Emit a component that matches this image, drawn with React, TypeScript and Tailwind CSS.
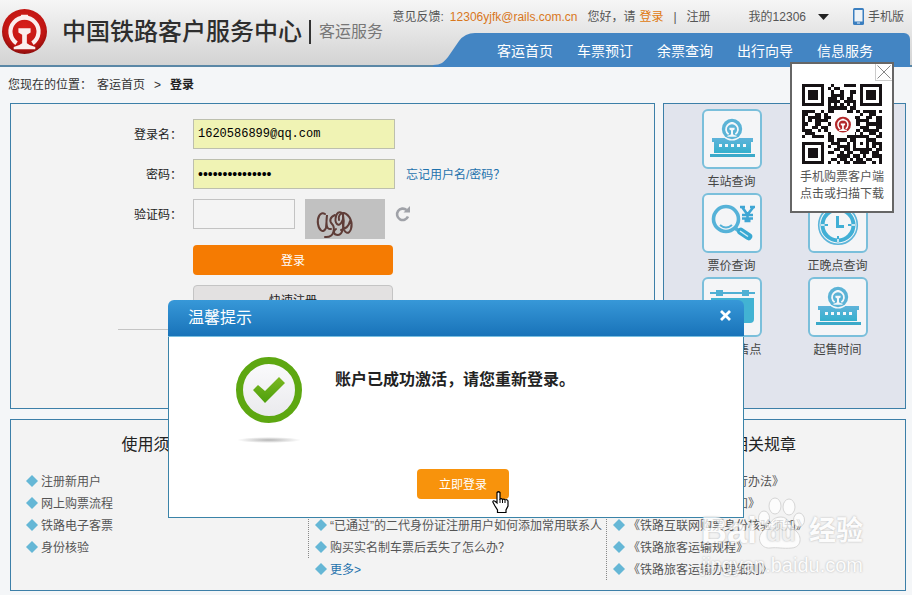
import React from "react";

const navItems = ["客运首页", "车票预订", "余票查询", "出行向导", "信息服务"];

const notices = ["注册新用户", "网上购票流程", "铁路电子客票", "身份核验"];

const questions = [
    "什么是互联网售票？",
    "如何办理退票和改签？",
    "“已通过”的二代身份证注册用户如何添加常用联系人",
    "购买实名制车票后丢失了怎么办？",
    "更多>",
];

const rules = [
    "《铁路车票实名制暂行办法》",
    "《铁路互联网售票须知》",
    "《铁路互联网购票身份核验须知》",
    "《铁路旅客运输规程》",
    "《铁路旅客运输办理细则》",
];

const qrRows = [
    "1111111001000111101111111",
    "1000001010110000001000001",
    "1011101001001001101011101",
    "1011101001111001001011101",
    "1011101011101011001011101",
    "1000001011110111101000001",
    "1111111010101010101111111",
    "0000000011111101100000000",
    "1111001011000011010111101",
    "1100110100000000001001100",
    "1011110110000000110011011",
    "1010111100000000011110011",
    "1100110010000000010011111",
    "1001101100000000001110011",
    "1110010100000000010111110",
    "0111000010000000101001101",
    "1001111011000011111110011",
    "0000000011011101100011100",
    "1111111001110010101010111",
    "1000001010011110100010101",
    "1011101000110110111111011",
    "1011101011001011001110110",
    "1011101000011110110100111",
    "1000001001101101011011001",
    "1111111010010110111100101",
];

function RailMark(props: { fill: string }) {
    const { fill } = props;
    return (
        <g fill={fill}>
            <path
                d="M15.500 36.500A15 15 0 1 1 32.500 36.500"
                fill="none"
                stroke={fill}
                strokeWidth="4.500"
            />
            <path d="M20.500 6h7l1.500 5h-10z" />
            <path d="M17.500 20.500h13v4.500l-4 2.500v9l3 2 6 2v2.500H12.500v-2.500l6-2 3-2v-9l-4-2.500z" />
        </g>
    );
}

function Logo(props: { className?: string }) {
    return (
        <svg viewBox="0 0 48 48" className={props.className} aria-hidden="true">
            <defs>
                <radialGradient id="logo-red" cx="0.5" cy="0.4" r="0.6">
                    <stop offset="0" stopColor="#d8201c" />
                    <stop offset="0.75" stopColor="#c01512" />
                    <stop offset="1" stopColor="#8d0e0d" />
                </radialGradient>
            </defs>
            <circle cx="24" cy="24" r="24" fill="url(#logo-red)" />
            <RailMark fill="#fbeeee" />
        </svg>
    );
}

function QrCode() {
    return (
        <svg viewBox="0 0 25 25" className="size-20" shapeRendering="crispEdges" role="img" aria-label="二维码">
            {qrRows.map((row, y) =>
                row.split("").map((cell, x) =>
                    cell === "1" ? <rect key={`${x}_${y}`} x={x} y={y} width="1" height="1" fill="#161214" /> : null
                )
            )}
            <rect x="9" y="9" width="7.5" height="7" fill="#fff" />
            <g transform="translate(10.3 10.2) scale(0.104)" shapeRendering="auto">
                <circle cx="24" cy="24" r="24" fill="#b3282a" />
                <RailMark fill="#fff" />
            </g>
        </svg>
    );
}

// Icons are drawn on a 60px tile, the 2px tile border lies outside the viewBox
const tileBox = "2 2 56 56";

function StationIcon() {
    return (
        <svg viewBox={tileBox} className="size-full" aria-hidden="true">
            <defs>
                <linearGradient id="station" x1="0" y1="0" x2="0" y2="1">
                    <stop offset="0" stopColor="#5fb3da" />
                    <stop offset="1" stopColor="#35b0cd" />
                </linearGradient>
            </defs>
            <path d="M10 29h41v4H10zM12 33h37v11H12z" fill="url(#station)" />
            <path d="M8 45h45v3H8z" fill="#3ba9c9" />
            <circle cx="30" cy="20" r="11.500" fill="#f4f7fa" />
            <circle cx="30" cy="20" r="10.200" fill="#5cb3d6" />
            <g transform="translate(20.4 10.6) scale(0.4)">
                <RailMark fill="#f4f7fa" />
            </g>
            <path d="M17 35h3v3h-3zM23 35h3v3h-3zM29 35h3v3h-3zM35 35h3v3h-3zM41 35h3v3h-3z" fill="#f4f7fa" />
        </svg>
    );
}

function PriceIcon() {
    return (
        <svg viewBox={tileBox} className="size-full" fill="none" aria-hidden="true">
            <circle cx="24" cy="26" r="12.500" stroke="#55b2d8" strokeWidth="3.600" />
            <path d="M18 32q6 5 12 0" stroke="#55b2d8" strokeWidth="2" />
            <path d="M33 35l4 3" stroke="#55b2d8" strokeWidth="4" />
            <path d="M39 38.500l7.500 5" stroke="#3aa9d2" strokeWidth="7.500" strokeLinecap="round" />
            <path d="M38 38l8 5.500" stroke="#d6eef7" strokeWidth="1.500" />
            <path d="M38 14h5M48 14h5M40 14l5.500 7.500 6-7.500M45.500 21v8M40 22h11M40 25.500h11M42.500 28h6" stroke="#3fa6d4" strokeWidth="2.600" />
        </svg>
    );
}

function ClockIcon() {
    return (
        <svg viewBox={tileBox} className="size-full" fill="none" aria-hidden="true">
            <circle cx="30" cy="32" r="19.300" stroke="#5cb5da" strokeWidth="1.600" />
            <circle cx="30" cy="32" r="15.500" stroke="#41afd5" strokeWidth="4" />
            <path d="M29.500 23v10.500H36" stroke="#41afd5" strokeWidth="3" />
            <path d="M30 15v3M30 46v3M13 32h3M44 32h3" stroke="#f4f7fa" strokeWidth="1.500" />
            <path d="M30 43v3M17 32h3M40 32h3" stroke="#41afd5" strokeWidth="2" />
        </svg>
    );
}

function AgencyIcon() {
    return (
        <svg viewBox={tileBox} className="size-full" aria-hidden="true">
            <path d="M8 15h45v2H8z" fill="#4fb0d4" />
            <path d="M14 13h7v6h-7zM40 13h7v6h-7z" fill="#4fb0d4" />
            <path d="M9 21h43v21q0 4-4 4H13q-4 0-4-4z" fill="#42b3d3" />
        </svg>
    );
}

const services = [
    { name: "车站查询", icon: <StationIcon /> },
    { name: "余票查询", icon: <ClockIcon /> },
    { name: "票价查询", icon: <PriceIcon /> },
    { name: "正晚点查询", icon: <ClockIcon /> },
    { name: "客票代售点", icon: <AgencyIcon /> },
    { name: "起售时间", icon: <StationIcon /> },
];

function Header() {
    return (
        <header className="flex h-[67px] justify-between border-b-2 border-[#5a87a6] bg-linear-to-b from-[#f6f6f6] to-[#d3d3d3]">
            <div className="flex items-center pb-0.5 pl-0.5">
                <Logo className="size-[45px] shrink-0" />
                <h1 className="ml-[15px] text-2xl leading-8 font-medium whitespace-nowrap text-[#2e2e2e]">
                    中国铁路客户服务中心
                </h1>
                <div className="ml-[7px] h-6 w-0.5 bg-[#333]" />
                <div className="ml-2 text-base leading-6 whitespace-nowrap text-[#777]">客运服务</div>
            </div>
            <div className="flex h-[67px] shrink-0 flex-col items-end">
                <div className="flex h-[33px] items-center pr-2 text-xs whitespace-nowrap text-[#555]">
                    <span>意见反馈:</span>
                    <a href="#mail" className="ml-1.5 text-[#d9771c]">12306yjfk@rails.com.cn</a>
                    <span className="ml-2.5">您好，请</span>
                    <a href="#login" className="ml-1 text-[#e07a10]">登录</a>
                    <span className="mx-2.5">|</span>
                    <a href="#register">注册</a>
                    <button type="button" className="ml-[38px] flex items-center gap-3">
                        我的12306
                        <svg viewBox="0 0 11 6" className="h-1.5 w-[11px]" fill="#222" aria-hidden="true">
                            <path d="M0 0h11L5.500 6z" />
                        </svg>
                    </button>
                    <a href="#mobile" className="ml-6 flex items-center gap-1">
                        <svg viewBox="0 0 11 17" className="h-[17px] w-[11px]" aria-hidden="true">
                            <rect width="11" height="17" rx="1.500" fill="#3b7fc0" />
                            <path d="M1.500 2h8v11.500h-8z" fill="#eef3f7" />
                            <path d="M4 15h3" stroke="#eef3f7" />
                        </svg>
                        手机版
                    </a>
                </div>
                <div className="mr-0.5 flex h-[34px]">
                    <svg viewBox="0 0 42 34" className="h-full w-[42px]" fill="#4385c3" aria-hidden="true">
                        <path d="M0 34V32C8 32 11 29 15 24L26 8Q32 0 42 0V34z" />
                    </svg>
                    <nav className="flex items-center gap-6 rounded-tr-md bg-[#4385c3] pt-0.5 pr-[37px] pl-[22px] text-sm text-white">
                        {navItems.map((item) => (
                            <a key={item} href="#nav" className="whitespace-nowrap">{item}</a>
                        ))}
                    </nav>
                </div>
            </div>
        </header>
    );
}

function LoginPanel() {
    const label = "w-[171px] shrink-0 text-right leading-8 text-[#222]";
    return (
        <section className="min-w-0 flex-1 border border-[#3c7fa8] bg-[#f3f3f3]">
            <form className="pt-[15px]">
                <div className="flex h-[30px] gap-[11px]">
                    <label htmlFor="user" className={label}>登录名：</label>
                    <input
                        id="user"
                        defaultValue="1620586899@qq.com"
                        className="h-[30px] w-[202px] border border-[#bdbfae] bg-[#f0f3b4] px-1 font-[Liberation_Mono,monospace] text-black"
                    />
                </div>
                <div className="mt-2.5 flex h-[30px] gap-[11px]">
                    <label htmlFor="password" className={label}>密码：</label>
                    <input
                        id="password"
                        type="password"
                        defaultValue="abcdefghijklmno"
                        className="h-[30px] w-[202px] border border-[#bdbfae] bg-[#f0f3b4] px-1 text-sm text-black"
                    />
                    <a href="#forgot" className="leading-8 whitespace-nowrap text-[#1f72ad]">忘记用户名/密码？</a>
                </div>
                <div className="mt-2.5 flex h-10 gap-[11px]">
                    <label htmlFor="captcha" className={label}>验证码：</label>
                    <div className="flex gap-2.5">
                        <input id="captcha" className="h-[30px] w-[102px] border border-[#c3c3c3] bg-[#f4f4f4] px-1" />
                        <svg viewBox="0 0 80 40" className="h-10 w-20 bg-[#c1c1c1]" role="img" aria-label="验证码图片" fill="none" stroke="#5f3d38" strokeWidth="2" strokeLinecap="round">
                            <path d="M20 15c-5-3-8 4-7 10s5 10 8 4l1-13c-1 8-1 15 4 14" />
                            <path d="M30 16c-5 2-6 6-3 9s3 14-7 13" />
                            <path d="M37 14c-6-4-8 8-5 11s7-4 6-9c2 8 0 20-5 20s-5-4-2-6" />
                            <path d="M38 14l0 12c1 9 6 10 8 4s-1-14-7-16c-4 0-6 3-5 7M36 31c4-1 8-4 9-9" />
                        </svg>
                        <button type="button" aria-label="刷新验证码" className="flex h-[30px] items-center">
                            <svg viewBox="0 0 16 16" className="size-4" fill="none" aria-hidden="true">
                                <path d="M13 10.500A5.700 5.700 0 1 1 11.500 4" stroke="#a0a2a8" strokeWidth="2.600" />
                                <path d="M8.500 6.500h6.500V0z" fill="#a0a2a8" />
                            </svg>
                        </button>
                    </div>
                </div>
                <div className="ml-[182px] flex w-[200px] flex-col gap-2.5 pt-1.5">
                    <button type="submit" className="h-[30px] rounded-[4px] bg-[#f57b02] pt-0.5 text-white">登录</button>
                    <button type="button" className="h-[30px] rounded-[4px] border border-[#c4c4c4] bg-[#e3e1e1] pt-0.5 text-[#222]">快速注册</button>
                </div>
                <hr className="mt-3.5 mr-24 ml-[107px] border-[#c4c4c4]" />
            </form>
        </section>
    );
}

function ServicePanel() {
    return (
        <aside className="w-[243px] shrink-0 border border-[#3c7fa8] bg-[#e1e4ed] pt-[5px]">
            <ul className="grid grid-cols-[60px_60px] justify-center gap-x-[46px]">
                {services.map((service) => (
                    <li key={service.name} className="h-[84px]">
                        <a href="#service" className="flex flex-col items-center text-[#444]">
                            <span className="size-[60px] rounded-md border-2 border-[#7abfdb] bg-[#f4f5f7]">{service.icon}</span>
                            <span className="leading-[26px] whitespace-nowrap">{service.name}</span>
                        </a>
                    </li>
                ))}
            </ul>
        </aside>
    );
}

function LinkList(props: { items: string[]; className?: string }) {
    return (
        <ul className={props.className}>
            {props.items.map((item) => (
                <li key={item} className="flex h-[22px] items-center gap-[3px]">
                    <svg viewBox="0 0 12 12" className="size-3 shrink-0" fill="#65b7d6" aria-hidden="true">
                        <path d="M6 0l6 6-6 6-6-6z" />
                    </svg>
                    <a
                        href="#article"
                        className={`pt-0.5 whitespace-nowrap ${item === "更多>" ? "text-[#1f72ad]" : "text-[#555]"}`}
                    >
                        {item}
                    </a>
                </li>
            ))}
        </ul>
    );
}

function InfoPanel() {
    const heading = "text-center text-base leading-[50px] text-[#222]";
    return (
        <section className="mt-2.5 grid grid-cols-3 items-start border border-[#3c7fa8] bg-[#f3f3f3] pb-2.5">
            <div className="border-r border-dotted border-[#888]">
                <h2 className={`${heading} pr-3`}>使用须知</h2>
                <LinkList items={notices} className="pl-[15px]" />
            </div>
            <div className="border-r border-dotted border-[#888]">
                <h2 className={heading}>常见问题</h2>
                <LinkList items={questions} className="pl-1.5" />
            </div>
            <div>
                <h2 className={`${heading} pl-4`}>相关规章</h2>
                <LinkList items={rules} className="pl-1.5" />
            </div>
        </section>
    );
}

function QrPopup() {
    return (
        <div className="absolute top-[62px] right-[18px] flex h-[151px] w-[104px] flex-col items-center border-2 border-[#666] bg-white pt-5">
            <button type="button" aria-label="关闭" className="absolute top-0 right-0 size-[17px] border-b border-l border-[#ccc]">
                <svg viewBox="0 0 16 16" className="size-4" stroke="#888" fill="none" aria-hidden="true">
                    <path d="M1.500 1.500l13 13M14.500 1.500l-13 13" />
                </svg>
            </button>
            <QrCode />
            <p className="mt-[5px] text-center leading-[17px] whitespace-nowrap text-[#555]">
                手机购票客户端
                <br />
                点击或扫描下载
            </p>
        </div>
    );
}

function SuccessDialog() {
    return (
        <div className="absolute inset-x-0 top-[300px] flex justify-center">
            <div role="dialog" aria-labelledby="dialog-title" className="w-[576px]">
                <div className="flex h-[37px] items-start justify-between rounded-t-md border-b border-[#79bfe0] bg-linear-to-b from-[#3798d8] to-[#1873b9] pr-3 pl-5">
                    <h2 id="dialog-title" className="text-base leading-9 text-white">温馨提示</h2>
                    <button type="button" aria-label="关闭" className="flex h-[30px] w-3.5 items-center justify-center">
                        <svg viewBox="0 0 11 11" className="size-[11px]" stroke="#fff" strokeWidth="2.800" aria-hidden="true">
                            <path d="M1 1l9 9M10 1l-9 9" />
                        </svg>
                    </button>
                </div>
                <div className="flex h-[181px] flex-col border border-t-0 border-[#3a83a8] bg-white pt-5">
                    <div className="flex gap-8 pl-[66px]">
                        <svg viewBox="0 0 68 90" className="h-[90px] w-[68px]" aria-hidden="true">
                            <defs>
                                <linearGradient id="disc" x1="0" y1="0" x2="0" y2="1">
                                    <stop offset="0" stopColor="#fbfbfd" />
                                    <stop offset="1" stopColor="#e9e9ec" />
                                </linearGradient>
                                <linearGradient id="tick" x1="0" y1="0" x2="0" y2="1">
                                    <stop offset="0" stopColor="#7cb821" />
                                    <stop offset="1" stopColor="#4c9f0c" />
                                </linearGradient>
                                <radialGradient id="shade">
                                    <stop offset="0" stopColor="#b4b4b4" />
                                    <stop offset="1" stopColor="#fff" />
                                </radialGradient>
                            </defs>
                            <circle cx="34" cy="33" r="29.500" fill="url(#disc)" stroke="#5da711" strokeWidth="7" />
                            <path d="M18 33l5-5 7 6 14-14 6 6-20 20z" fill="url(#tick)" />
                            <ellipse cx="34" cy="83" rx="32" ry="3" fill="url(#shade)" />
                        </svg>
                        <p className="mt-[11px] text-base leading-6 font-bold whitespace-nowrap text-[#222]">
                            账户已成功激活，请您重新登录。
                        </p>
                    </div>
                    <div className="relative mt-[22px] ml-[248px] w-[92px]">
                        <button type="button" className="h-[30px] w-full rounded-[4px] bg-[#f8930c] pt-0.5 text-white">立即登录</button>
                        <svg viewBox="0 0 17 22" className="absolute top-[22px] left-[75px] h-[22px] w-[17px]" aria-hidden="true">
                            <path
                                d="M5 1.500q1.500-1.500 3 0V8q1.500-1 2.500 0.500 1.500-1 2.500 0.500 2-1 3 1v5l-2 4V21.500H5.500V19L3 15 0.800 11q0.500-2 2.200-0.800L5 12z"
                                fill="#fff"
                                stroke="#000"
                                strokeWidth="1.200"
                            />
                            <path d="M8 8v4M10.500 9v3M13 9.500V12" stroke="#000" />
                        </svg>
                    </div>
                </div>
            </div>
        </div>
    );
}

function Watermark() {
    return (
        <div className="pointer-events-none absolute top-[497px] right-[49px] text-white opacity-75" aria-hidden="true">
            <div className="flex items-end justify-end font-bold text-shadow-[0_0_2px_#999]">
                <span className="text-4xl leading-10">Bai</span>
                <span className="relative flex h-[54px] w-12 items-end justify-center pb-0.5">
                    <svg viewBox="0 0 48 54" className="absolute inset-0 size-full" fill="#fff" stroke="#ccc">
                        <ellipse cx="7" cy="21" rx="5.500" ry="7" />
                        <ellipse cx="18" cy="9" rx="6" ry="8" />
                        <ellipse cx="32" cy="10" rx="6" ry="8" />
                        <ellipse cx="42" cy="23" rx="5.500" ry="7" />
                        <path d="M24 20c8 0 9 9 15 14s6 16-4 17-14-1-22 0-15-9-7-17 9-14 18-14z" />
                    </svg>
                    <span className="relative text-2xl leading-8 text-[#eee]">du</span>
                </span>
                <span className="pl-1 text-[27px] leading-10 whitespace-nowrap">经验</span>
            </div>
            <div className="text-right text-xl leading-7 text-shadow-[0_0_2px_#999]">jingyan.baidu.com</div>
        </div>
    );
}

export default function App() {
    return (
        <div className="relative min-h-screen bg-[#f4f6f8] font-[Liberation_Sans,Noto_Sans_CJK_SC,sans-serif] text-xs">
            <Header />
            <div className="flex h-9 items-center pl-2 whitespace-nowrap text-[#333]">
                <span>您现在的位置：</span>
                <a href="#home" className="ml-[5px]">客运首页</a>
                <span className="mx-[9px]">&gt;</span>
                <strong className="text-[#222]">登录</strong>
            </div>
            <main className="pr-1.5 pb-1 pl-2.5">
                <div className="flex min-h-[306px] gap-2">
                    <LoginPanel />
                    <ServicePanel />
                </div>
                <InfoPanel />
            </main>
            <QrPopup />
            <SuccessDialog />
            <Watermark />
        </div>
    );
}
